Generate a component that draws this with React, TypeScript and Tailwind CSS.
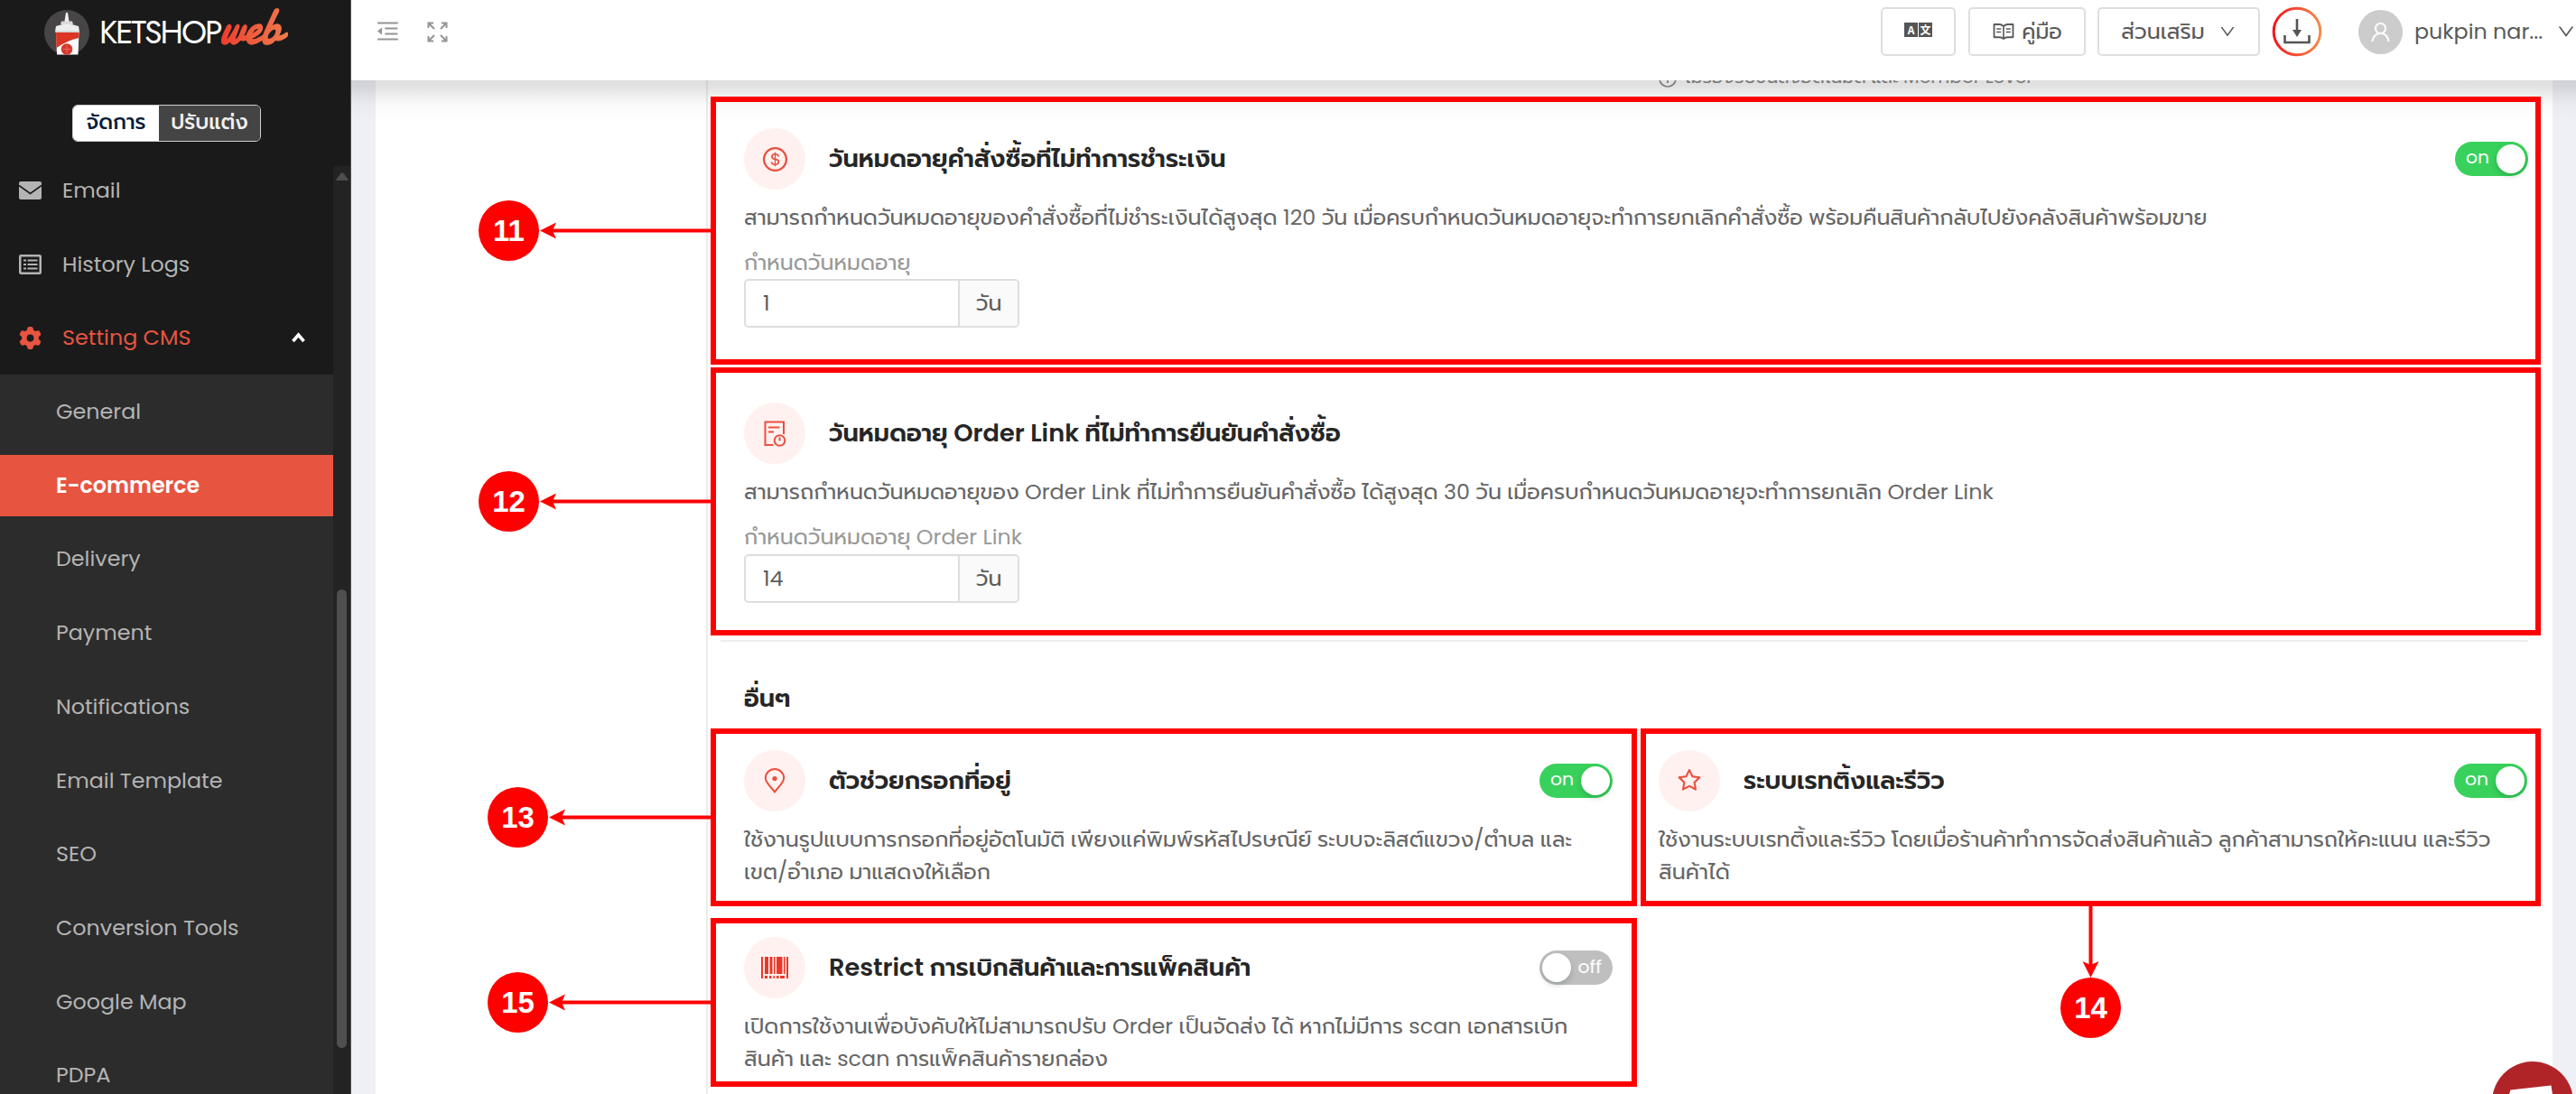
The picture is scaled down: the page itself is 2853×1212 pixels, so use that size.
import type { ReactNode } from "react";
import clsx from "clsx";
import {
  AiOutlineDollar,
  AiOutlineDown,
  AiOutlineMenuFold,
  AiOutlineRead,
  AiOutlineStar,
  AiOutlineUser,
} from "react-icons/ai";
import { FaGear } from "react-icons/fa6";

const subMenu = [
  "General",
  "E-commerce",
  "Delivery",
  "Payment",
  "Notifications",
  "Email Template",
  "SEO",
  "Conversion Tools",
  "Google Map",
  "PDPA",
];

function MailIcon() {
  return (
    <svg width="25" height="20" viewBox="0 0 25 20" fill="none">
      <rect width="25" height="20" rx="2" fill="#b4b4b4" />
      <path d="M0 4.5 L12.5 13.5 L25 4.5" stroke="#1a1a1a" strokeWidth="1.6" />
    </svg>
  );
}

function ListIcon() {
  return (
    <svg width="25" height="22" viewBox="0 0 25 22" fill="none" stroke="#b4b4b4">
      <rect x="1.25" y="1.25" width="22.5" height="19.5" rx="1" strokeWidth="2.5" />
      <path d="M5 6.5h3M5 11h3M5 15.5h3M9.5 6.5h11M9.5 11h11M9.5 15.5h11" strokeWidth="2.2" />
    </svg>
  );
}

function BottleLogo() {
  return (
    <svg className="shrink-0" width="52" height="52" viewBox="0 0 52 52">
      <circle cx="25" cy="26" r="25" fill="#474545" />
      <path d="M24 4h2l1.6 10h-5.2z" fill="#f2f2f2" />
      <path d="M19 13.5h12l1 3.5h-14z" fill="#d9d9d9" />
      <path d="M13 19q12-5 25 0l1 6H12z" fill="#ededed" />
      <path d="M12.5 24.5h26.5v2H12.5z" fill="#cfcfcf" />
      <path d="M13 26h25.5l-1 24.5h-23.5z" fill="#fafafa" />
      <path d="M13 26h25.5l-.3 6q-13 3-24.7 11z" fill="#dc3523" />
      <circle cx="25" cy="44.5" r="6.3" fill="#d6392b" />
      <path d="M20.5 44.5h9M25 40v9" stroke="#e8695a" strokeWidth="1" />
    </svg>
  );
}

function FullscreenIcon() {
  return (
    <svg width="23" height="23" viewBox="0 0 23 23" fill="none" stroke="#949494" strokeWidth="2">
      <path d="M1.5 7V1.5H7M2 2l6 6M16 1.5h5.5V7M21 2l-6 6M1.5 16v5.5H7M2 21l6-6M16 21.5h5.5V16M21 21l-6-6" />
    </svg>
  );
}

function LanguageIcon() {
  return (
    <span className="flex gap-px font-['Noto_Sans_CJK_JP',sans-serif] text-[12px] leading-4 font-bold text-white">
      <span className="h-4 w-[15px] bg-[#555] text-center">A</span>
      <span className="h-4 w-[15px] bg-[#555] text-center">文</span>
    </span>
  );
}

function OrderIcon() {
  return (
    <svg width="25" height="29" viewBox="0 0 25 29" fill="none" stroke="#e8503f" strokeWidth="2">
      <path d="M10.5 27H1.5V1.5h20.5V15" />
      <path d="M5 7.5h12.5M5 12.5h6" />
      <circle cx="17.5" cy="22" r="5.8" />
      <path d="M17.5 18.5v4" />
    </svg>
  );
}

function PinIcon() {
  return (
    <svg width="24" height="28" viewBox="0 0 24 28" fill="none">
      <path
        d="M12 26.3C7.5 20.5 1.8 16.2 1.8 10.8a10.2 9.7 0 0 1 20.4 0C22.2 16.2 16.5 20.5 12 26.3z"
        stroke="#e8503f"
        strokeWidth="2"
      />
      <circle cx="12" cy="11.5" r="2.6" fill="#e8503f" />
    </svg>
  );
}

function BarcodeIcon() {
  return (
    <svg width="30" height="24" viewBox="0 0 30 24" fill="#e8382a">
      <path d="M0 0h2v24H0zM4 0h4v19H4zM9.5 0h3v19h-3zM14 0h1.5v19H14zM17 0h6.5v19H17zM25 0h1.5v19H25zM28 0h2v24h-2z" />
      <path d="M4 21h3v3H4zM9 21h2.5v3H9zM13.5 21H15v3h-1.5zM17 21h2.5v3H17zM21 21h5v3h-5z" />
    </svg>
  );
}

function Toggle({ on }: { on: boolean }) {
  return (
    <span
      className={clsx(
        "flex h-[38px] w-[81px] shrink-0 items-center justify-between rounded-full text-[20.4px] leading-none text-white",
        on ? "bg-[#38d15c] pr-[3px] pl-[12px]" : "flex-row-reverse bg-[#bfbfbf] pr-[12px] pl-[3px]",
      )}
    >
      <span className="pb-[3px]">{on ? "on" : "off"}</span>
      <span className="h-[32px] w-[32px] rounded-full bg-white shadow-[0_3px_6px_rgba(0,35,11,0.2)]" />
    </span>
  );
}

function SettingTitle({ icon, title, on }: { icon: ReactNode; title: string; on?: boolean }) {
  return (
    <div className="flex h-[68px] items-center">
      <span className="grid h-[68px] w-[68px] shrink-0 place-items-center rounded-full bg-[#fff1ef] text-[#e8503f]">
        {icon}
      </span>
      <h3 className="ml-[26px] text-[27.2px] leading-10 font-semibold text-[#262626]">{title}</h3>
      {on !== undefined && (
        <span className="ml-auto">
          <Toggle on={on} />
        </span>
      )}
    </div>
  );
}

function DayInput({ value }: { value: string }) {
  return (
    <div className="flex h-[54px] w-[305px] overflow-hidden rounded-[5px] border-2 border-[#dedede] text-[23.8px] text-[#5c5c5c]">
      <span className="flex flex-1 items-center pl-[19px]">{value}</span>
      <span className="flex w-[66px] items-center justify-center border-l-2 border-[#dedede] bg-[#fafafa]">วัน</span>
    </div>
  );
}

function SettingCard({ icon, title, lines, on }: { icon: ReactNode; title: string; lines: string[]; on: boolean }) {
  return (
    <div className="w-[962px]">
      <SettingTitle icon={icon} title={title} on={on} />
      <p className="mt-[13px] text-[23.8px] leading-[35.7px] whitespace-nowrap text-[#666]">
        {lines.map((l) => (
          <span key={l} className="block">
            {l}
          </span>
        ))}
      </p>
    </div>
  );
}

function Sidebar() {
  return (
    <aside className="flex h-full w-[389px] shrink-0 flex-col border-r border-[#555] bg-[#1a1a1a] text-[23.8px] text-[#b4b4b4]">
      <div className="flex h-[63px] items-center pt-[9px] pl-[49px]">
        <BottleLogo />
        <span className="ml-[9px] w-[136px] font-['Jost',sans-serif] text-[35.5px] leading-none tracking-[-2px] text-white">
          KETSHOP
        </span>
        <span className="-mt-[12px] -skew-x-6 scale-y-120 bg-linear-to-r from-[#ee3b2f] to-[#ee7a4c] bg-clip-text pr-[8px] font-['Damion',cursive] text-[49px] leading-[60px] font-bold text-transparent">
          web
        </span>
      </div>
      <div className="mt-[53px] ml-[80px] flex h-[41px] w-[209px] overflow-hidden rounded-[6px] border border-[#cfcfcf] text-[23px] leading-[37px] font-medium">
        <span className="w-[95px] bg-white text-center text-[#0b1c38]">จัดการ</span>
        <span className="flex-1 bg-[#444] text-center text-[#f0f0f0]">ปรับแต่ง</span>
      </div>

      <div className="mt-[13px] flex min-h-0 flex-1">
        <nav className="w-[369px] overflow-hidden">
          <div className="flex h-[81.7px] items-center pl-[21px]">
            <MailIcon />
            <span className="ml-[23px]">Email</span>
          </div>
          <div className="flex h-[81.7px] items-center pl-[21px]">
            <ListIcon />
            <span className="ml-[23px]">History Logs</span>
          </div>
          <div className="flex h-[81.7px] items-center pr-[31px] pl-[21px] text-[#e75540]">
            <FaGear size={25} />
            <span className="ml-[23px]">Setting CMS</span>
            <svg className="ml-auto" width="15" height="12" viewBox="0 0 15 12" fill="none">
              <path d="M1.5 10l6-7 6 7" stroke="#fff" strokeWidth="3.5" />
            </svg>
          </div>
          <div className="bg-[#2c2c2c] pb-10">
            {subMenu.map((m) => (
              <div key={m} className="flex h-[81.7px] items-center">
                <span
                  className={clsx(
                    "flex h-[68px] w-full items-center pl-[62px]",
                    m === "E-commerce" && "bg-[#e75540] font-semibold text-white",
                  )}
                >
                  {m}
                </span>
              </div>
            ))}
          </div>
        </nav>
        <div className="mt-[14px] flex flex-1 flex-col items-center bg-[#232323]">
          <svg className="mt-[7px]" width="14" height="9" viewBox="0 0 14 9">
            <path d="M5.5 1Q7-.5 8.5 1L13.5 7.5V9H.5V7.5z" fill="#4d4d4d" />
          </svg>
          <span className="mt-[453px] h-[508px] w-[11px] rounded-full bg-[#4f4f4f]" />
        </div>
      </div>
    </aside>
  );
}

function Header() {
  return (
    <header className="relative z-10 flex h-[89px] w-full shrink-0 items-start bg-white pl-[26px] text-[23.8px] text-[#595959]">
      <AiOutlineMenuFold className="mt-[20px] text-[#949494]" size={29} />
      <span className="mt-[24px] ml-[29px]">
        <FullscreenIcon />
      </span>
      <div className="mt-[8px] ml-auto flex h-[54px] shrink-0 items-center">
        <span className="flex h-full w-[83px] items-center justify-center rounded-[5px] border-2 border-[#dedede] pb-[4px]">
          <LanguageIcon />
        </span>
        <span className="ml-[14px] flex h-full w-[130px] items-center justify-center gap-[7px] rounded-[5px] border-2 border-[#dedede]">
          <AiOutlineRead size={26} />
          <span className="leading-none">คู่มือ</span>
        </span>
        <span className="ml-[13px] flex h-full w-[180px] items-center justify-center gap-[15px] rounded-[5px] border-2 border-[#dedede]">
          <span className="leading-none">ส่วนเสริม</span>
          <AiOutlineDown size={20} />
        </span>
        <svg className="ml-[13px]" width="56" height="56" viewBox="0 0 56 56" fill="none">
          <defs>
            <linearGradient id="ring" x1="0" x2="1" y1="0" y2="0">
              <stop offset="0" stopColor="#f5141a" />
              <stop offset="1" stopColor="#f58a4c" />
            </linearGradient>
          </defs>
          <circle cx="28" cy="28" r="25.8" stroke="url(#ring)" strokeWidth="3" />
          <path d="M28 14v17M14.5 32v8h27v-8" stroke="#555" strokeWidth="2.6" />
          <path d="M23 26h10l-5 8z" fill="#555" />
        </svg>
        <span className="ml-[40px] grid h-[49px] w-[49px] place-items-center rounded-full bg-[#ccc] text-white">
          <AiOutlineUser size={27} />
        </span>
        <span className="ml-[13px] w-[145px] leading-none whitespace-nowrap">pukpin nar...</span>
        <AiOutlineDown className="ml-[12px]" size={22} />
      </div>
    </header>
  );
}

const labelText = "text-[23.8px] leading-[34px] whitespace-nowrap";

function Content() {
  return (
    <main className="flex min-h-0 flex-1 bg-[#eff0f6] pl-[27px]">
      <div className="flex w-[2411px] overflow-hidden bg-white">
        <div className="w-[366px] shrink-0" />
        <div className="flex-1 border-l-2 border-[#ececec] pl-[40px]">
          {/* tail of the previous setting, scrolled under the header */}
          <div className="-mt-[22px] flex h-[46px] items-start gap-[9px] pl-[1013px] text-[20.4px] leading-9 text-[#8a8a8a]">
            <svg className="mt-[10px]" width="20" height="20" viewBox="0 0 20 20" fill="none" stroke="#8a8a8a" strokeWidth="1.7">
              <circle cx="10" cy="10" r="9" />
              <path d="M10 9v6M10 5v2" />
            </svg>
            ไม่รองรับขนส่งอัตโนมัติ และ Member Level
          </div>

          <section className="h-[294px] w-[1976px] pt-[29px]">
            <SettingTitle icon={<AiOutlineDollar size={31} />} title="วันหมดอายุคำสั่งซื้อที่ไม่ทำการชำระเงิน" on />
            <p className={clsx(labelText, "mt-[14px] text-[#666]")}>
              สามารถกำหนดวันหมดอายุของคำสั่งซื้อที่ไม่ชำระเงินได้สูงสุด 120 วัน
              เมื่อครบกำหนดวันหมดอายุจะทำการยกเลิกคำสั่งซื้อ พร้อมคืนสินค้ากลับไปยังคลังสินค้าพร้อมขาย
            </p>
            <p className={clsx(labelText, "mt-[16px] mb-px text-[#999]")}>กำหนดวันหมดอายุ</p>
            <DayInput value="1" />
          </section>

          <section className="-ml-[26px] h-[304px] w-[2002px] border-b-2 border-[#ececec] pt-[39px] pl-[26px]">
            <SettingTitle icon={<OrderIcon />} title="วันหมดอายุ Order Link ที่ไม่ทำการยืนยันคำสั่งซื้อ" />
            <p className={clsx(labelText, "mt-[14px] text-[#666]")}>
              สามารถกำหนดวันหมดอายุของ Order Link ที่ไม่ทำการยืนยันคำสั่งซื้อ ได้สูงสุด 30 วัน
              เมื่อครบกำหนดวันหมดอายุจะทำการยกเลิก Order Link
            </p>
            <p className={clsx(labelText, "mt-[16px] mb-[2px] text-[#999]")}>กำหนดวันหมดอายุ Order Link</p>
            <DayInput value="14" />
          </section>

          <h2 className="mt-[43px] text-[27.2px] leading-10 font-semibold text-[#262626]">อื่นๆ</h2>
          <div className="mt-[37px] flex w-[1976px] flex-wrap gap-x-[51px] gap-y-[55px]">
            <SettingCard
              icon={<PinIcon />}
              title="ตัวช่วยกรอกที่อยู่"
              on
              lines={[
                "ใช้งานรูปแบบการกรอกที่อยู่อัตโนมัติ เพียงแค่พิมพ์รหัสไปรษณีย์ ระบบจะลิสต์แขวง/ตำบล และ",
                "เขต/อำเภอ มาแสดงให้เลือก",
              ]}
            />
            <SettingCard
              icon={<AiOutlineStar size={30} />}
              title="ระบบเรทติ้งและรีวิว"
              on
              lines={[
                "ใช้งานระบบเรทติ้งและรีวิว โดยเมื่อร้านค้าทำการจัดส่งสินค้าแล้ว ลูกค้าสามารถให้คะแนน และรีวิว",
                "สินค้าได้",
              ]}
            />
            <SettingCard
              icon={<BarcodeIcon />}
              title="Restrict การเบิกสินค้าและการแพ็คสินค้า"
              on={false}
              lines={[
                "เปิดการใช้งานเพื่อบังคับให้ไม่สามารถปรับ Order เป็นจัดส่ง ได้ หากไม่มีการ scan เอกสารเบิก",
                "สินค้า และ scan การแพ็คสินค้ารายกล่อง",
              ]}
            />
          </div>
        </div>
      </div>
    </main>
  );
}

// Numbered call-outs drawn over the page
const badge =
  "absolute grid h-[67px] w-[67px] place-items-center rounded-full bg-[#fe0000] font-['Liberation_Sans',sans-serif] text-[33px] leading-none font-bold text-white";
const frame = "absolute border-6 border-[#fe0000]";

function Annotations() {
  return (
    <div className="pointer-events-none absolute inset-0">
      <div className={clsx(frame, "top-[107px] left-[787px] h-[297px] w-[2027px]")} />
      <div className={clsx(frame, "top-[407px] left-[787px] h-[297px] w-[2027px]")} />
      <div className={clsx(frame, "top-[807px] left-[787px] h-[197px] w-[1026px]")} />
      <div className={clsx(frame, "top-[807px] left-[1817px] h-[197px] w-[997px]")} />
      <div className={clsx(frame, "top-[1017px] left-[787px] h-[187px] w-[1026px]")} />
      <svg className="absolute inset-0" width="2853" height="1212" stroke="#fe0000" strokeWidth="4" fill="#fe0000">
        <path d="M610 255.5H788M610 555.5H788M620 905.5H788M620 1110.5H788M2315.5 1003V1070" />
        <g stroke="none">
          <path d="M598 255.5l18-9-4 9 4 9z" />
          <path d="M598 555.5l18-9-4 9 4 9z" />
          <path d="M608 905.5l18-9-4 9 4 9z" />
          <path d="M608 1110.5l18-9-4 9 4 9z" />
          <path d="M2315.5 1083l-9-18 9 4 9-4z" />
        </g>
      </svg>
      <span className={clsx(badge, "top-[222px] left-[530px]")}>11</span>
      <span className={clsx(badge, "top-[522px] left-[530px]")}>12</span>
      <span className={clsx(badge, "top-[872px] left-[540px]")}>13</span>
      <span className={clsx(badge, "top-[1083px] left-[2282px]")}>14</span>
      <span className={clsx(badge, "top-[1077px] left-[540px]")}>15</span>
    </div>
  );
}

export default function App() {
  return (
    <div className="relative flex h-[1212px] w-[2853px] overflow-hidden bg-white font-['Poppins','Prompt','Noto_Sans',sans-serif]">
      <Sidebar />
      <div className="relative flex min-w-0 flex-1 flex-col">
        <Header />
        <Content />
        <div className="pointer-events-none absolute inset-x-0 top-[89px] h-[46px] bg-[linear-gradient(to_bottom,rgba(0,0,0,0.13)_0px,rgba(0,0,0,0.11)_8px,rgba(0,0,0,0.06)_18px,rgba(0,0,0,0.02)_28px,transparent_46px)]" />
      </div>
      <svg className="absolute right-[3px] bottom-0" width="90" height="36" viewBox="0 0 90 36">
        <circle cx="45" cy="45" r="45" fill="#b02428" />
        <path d="M19 36l1.5-4.5 45-5 1.5 9.5z" fill="#fff" />
      </svg>
      <Annotations />
    </div>
  );
}
